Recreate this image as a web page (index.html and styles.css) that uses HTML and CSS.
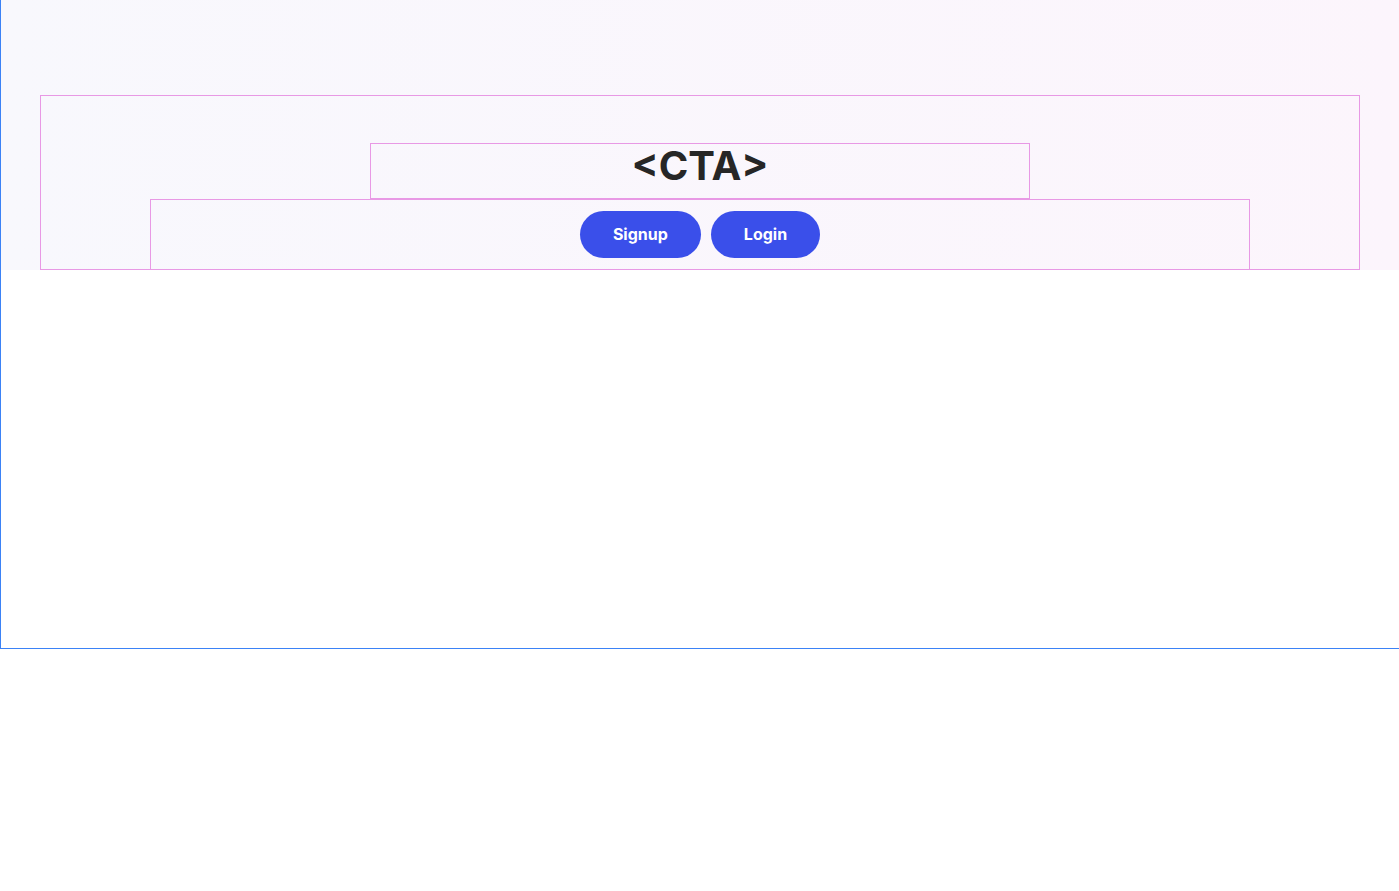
FILE: index.html
```html
<!DOCTYPE html>
<html lang="en">
<head>
<meta charset="utf-8">
<title>CTA</title>
<link rel="stylesheet" href="styles.css">
</head>
<body>
<div class="frame">
  <section class="hero">
    <div class="hero-inner">
      <div class="heading-box">
        <h1 class="title">&lt;CTA&gt;</h1>
      </div>
      <div class="actions">
        <a class="btn" href="#">Signup</a>
        <a class="btn" href="#">Login</a>
      </div>
    </div>
  </section>
</div>
</body>
</html>
```

FILE: styles.css
```css
* { box-sizing: border-box; }
html, body { margin: 0; padding: 0; background: #ffffff; }
body { font-family: Inter, "Noto Sans", sans-serif; }

.frame {
  margin-top: -1px;
  width: 1400px;
  height: 650px;
  border: 1px solid #3b82f6;
}

.hero {
  background: linear-gradient(90deg, #f8f8fd 0%, #fcf5fc 100%);
  padding: 95px 39px 0 39px;
}

.hero-inner {
  border: 1px solid #e899e5;
  padding-top: 47px;
  display: flex;
  flex-direction: column;
  align-items: center;
}

.heading-box {
  width: 660px;
  height: 56px;
  border: 1px solid #e899e5;
  display: flex;
  justify-content: center;
}

.title {
  margin: 0;
  font-size: 40px;
  font-weight: 700;
  line-height: 44px;
  color: #262626;
}

.actions {
  width: 1100px;
  height: 71px;
  margin-bottom: -1px;
  border: 1px solid #e899e5;
  display: flex;
  justify-content: center;
  gap: 10px;
  padding-top: 11px;
}

.btn {
  display: inline-flex;
  align-items: center;
  justify-content: center;
  height: 47px;
  padding: 0 33px 1px;
  border-radius: 9999px;
  background: #3a4fea;
  color: #ffffff;
  font-weight: 700;
  font-size: 16px;
  text-decoration: none;
}
```
